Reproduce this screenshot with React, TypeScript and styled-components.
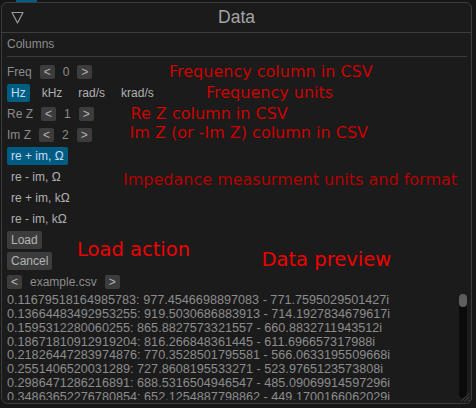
import React from "react";
import styled, { createGlobalStyle } from "styled-components";

const GlobalStyle = createGlobalStyle`
  html, body {
    margin: 0;
    padding: 0;
    background: #161616;
  }
  body {
    font-family: "Liberation Sans", Arial, sans-serif;
  }
`;

const Page = styled.div`
  position: relative;
  width: 476px;
  height: 408px;
  overflow: hidden;
  background: #161616;
`;

const Backdrop = styled.div`
  height: 2px;
  display: flex;
  padding-left: 16px;
`;

const BackdropChip = styled.div`
  width: 21px;
  height: 2px;
  background: #005c80;
`;

const Window = styled.section`
  position: relative;
  margin-left: 1px;
  width: 471px;
  height: 402px;
  box-sizing: border-box;
  border: 1px solid #3c3c3c;
  border-radius: 6px;
  background: #1b1b1b;
  display: flex;
  flex-direction: column;
  overflow: hidden;
`;

const TitleBar = styled.header`
  height: 30px;
  box-sizing: border-box;
  border-bottom: 1px solid #3c3c3c;
  display: grid;
  grid-template-columns: 1fr auto 1fr;
  align-items: center;
  padding: 0 9px;
`;

const Title = styled.div`
  font-size: 17.5px;
  line-height: 29px;
  color: #a4a4a4;
`;

const Content = styled.div`
  display: flex;
  flex-direction: column;
  padding: 2px 4px 0 5px;
`;

const SectionLabel = styled.div`
  font-size: 12px;
  line-height: 18px;
  height: 18px;
  color: #8c8c8c;
`;

const Separator = styled.div`
  margin-top: 3px;
  height: 1px;
  background: #3a3a3a;
`;

const Rows = styled.div`
  margin-top: 6px;
  display: flex;
  flex-direction: column;
  gap: 3px;
`;

const Row = styled.div`
  display: flex;
  align-items: center;
  gap: 8px;
  height: 18px;
`;

const Label = styled.span`
  font-size: 12px;
  line-height: 18px;
  color: #8c8c8c;
  white-space: pre;
`;

const SmallButton = styled.button`
  width: 15px;
  height: 14px;
  padding: 0;
  border: none;
  border-radius: 2px;
  background: #3c3c3c;
  color: #b4b4b4;
  font-family: inherit;
  font-size: 12px;
  line-height: 14px;
  text-align: center;
`;

const Selectable = styled.button<{ $selected?: boolean }>`
  height: 18px;
  padding: 0 4px;
  border: none;
  border-radius: 2px;
  background: ${(p) => (p.$selected ? "#005c80" : "transparent")};
  color: ${(p) => (p.$selected ? "#c0deff" : "#b0b0b0")};
  font-family: inherit;
  font-size: 12px;
  line-height: 18px;
  white-space: pre;
`;

const ActionButton = styled.button`
  height: 18px;
  padding: 0 4px;
  border: none;
  border-radius: 2px;
  background: #3c3c3c;
  color: #b4b4b4;
  font-family: inherit;
  font-size: 12px;
  line-height: 18px;
`;

const ButtonRow = styled.div`
  display: flex;
  height: 18px;
`;

const Preview = styled.div`
  margin-top: 3px;
  height: 106px;
  display: flex;
  gap: 4px;
`;

const Lines = styled.div`
  flex: 1;
  overflow: hidden;
  font-size: 12.65px;
  line-height: 13.85px;
  color: #8c8c8c;
  white-space: pre;
`;

const ScrollTrack = styled.div`
  width: 8px;
  height: 104px;
  border-radius: 4px;
  background: #0b0b0b;
  display: flex;
  flex-direction: column;
`;

const ScrollThumb = styled.div`
  height: 13px;
  border-radius: 4px;
  background: #5e5e5e;
`;

const Grip = styled.svg`
  position: absolute;
  right: 1px;
  bottom: 1px;
`;

const Annotation = styled.span<{ $x: number; $y: number; $size: number; $color: string }>`
  position: absolute;
  left: ${(p) => p.$x}px;
  top: ${(p) => p.$y}px;
  font-family: "DejaVu Sans", Verdana, sans-serif;
  font-size: ${(p) => p.$size}px;
  line-height: 1;
  color: ${(p) => p.$color};
  white-space: pre;
`;

const lines = [
  "0.11679518164985783: 977.4546698897083 - 771.7595029501427i",
  "0.13664483492953255: 919.5030686883913 - 714.1927834679617i",
  "0.1595312280060255: 865.8827573321557 - 660.8832711943512i",
  "0.18671810912919204: 816.266848361445 - 611.696657317988i",
  "0.21826447283974876: 770.3528501795581 - 566.0633195509668i",
  "0.2551406520031289: 727.8608195533271 - 523.9765123573808i",
  "0.2986471286216891: 688.5316504946547 - 485.09069914597296i",
  "0.34863652276780854: 652.1254887798862 - 449.1700166062029i",
];

const annotations = [
  { text: "Frequency column in CSV", x: 169, y: 64, size: 16, color: "#cc0000" },
  { text: "Frequency units", x: 206, y: 84.5, size: 16, color: "#cc0000" },
  { text: "Re Z column in CSV", x: 130.5, y: 105.5, size: 16, color: "#cc0000" },
  { text: "Im Z (or -Im Z) column in CSV", x: 129.5, y: 125, size: 16, color: "#cc0000" },
  { text: "Impedance measurment units and format", x: 123, y: 172, size: 16, color: "#b40000" },
  { text: "Load action", x: 77, y: 239.5, size: 19.5, color: "#f00000" },
  { text: "Data preview", x: 261.5, y: 249.5, size: 19.5, color: "#f00000" },
];

function Stepper({ label, value }: { label: string; value: string }) {
  return (
    <Row>
      <Label>{label}</Label>
      <SmallButton>&lt;</SmallButton>
      <Label>{value}</Label>
      <SmallButton>&gt;</SmallButton>
    </Row>
  );
}

export default function App() {
  return (
    <Page>
      <GlobalStyle />
      <Backdrop>
        <BackdropChip />
      </Backdrop>
      <Window>
        <TitleBar>
          <svg width="13" height="13" viewBox="0 0 13 13">
            <polygon points="1,1.5 12,1.5 6.5,12" fill="none" stroke="#9a9a9a" strokeWidth="1.2" strokeLinejoin="round" />
          </svg>
          <Title>Data</Title>
          <span />
        </TitleBar>
        <Content>
          <SectionLabel>Columns</SectionLabel>
          <Separator />
          <Rows>
            <Stepper label="Freq" value="0" />
            <Row>
              <Selectable $selected>Hz</Selectable>
              <Selectable>kHz</Selectable>
              <Selectable>rad/s</Selectable>
              <Selectable>krad/s</Selectable>
            </Row>
            <Stepper label="Re Z" value="1" />
            <Stepper label="Im Z" value="2" />
            <ButtonRow>
              <Selectable $selected>re + im, Ω</Selectable>
            </ButtonRow>
            <ButtonRow>
              <Selectable>re - im, Ω</Selectable>
            </ButtonRow>
            <ButtonRow>
              <Selectable>re + im, kΩ</Selectable>
            </ButtonRow>
            <ButtonRow>
              <Selectable>re - im, kΩ</Selectable>
            </ButtonRow>
            <ButtonRow>
              <ActionButton>Load</ActionButton>
            </ButtonRow>
            <ButtonRow>
              <ActionButton>Cancel</ActionButton>
            </ButtonRow>
            <Row>
              <SmallButton>&lt;</SmallButton>
              <Label>example.csv</Label>
              <SmallButton>&gt;</SmallButton>
            </Row>
          </Rows>
          <Preview>
            <Lines>
              {lines.map((l) => (
                <div key={l}>{l}</div>
              ))}
            </Lines>
            <ScrollTrack>
              <ScrollThumb />
            </ScrollTrack>
          </Preview>
        </Content>
        <Grip width="10" height="10" viewBox="0 0 10 10">
          <line x1="9.5" y1="1" x2="1" y2="9.5" stroke="#4a4a4a" strokeWidth="1" />
          <line x1="9.5" y1="4.5" x2="4.5" y2="9.5" stroke="#4a4a4a" strokeWidth="1" />
          <line x1="9.5" y1="8" x2="8" y2="9.5" stroke="#4a4a4a" strokeWidth="1" />
        </Grip>
      </Window>
      {annotations.map((a) => (
        <Annotation key={a.text} $x={a.x} $y={a.y} $size={a.size} $color={a.color}>
          {a.text}
        </Annotation>
      ))}
    </Page>
  );
}
